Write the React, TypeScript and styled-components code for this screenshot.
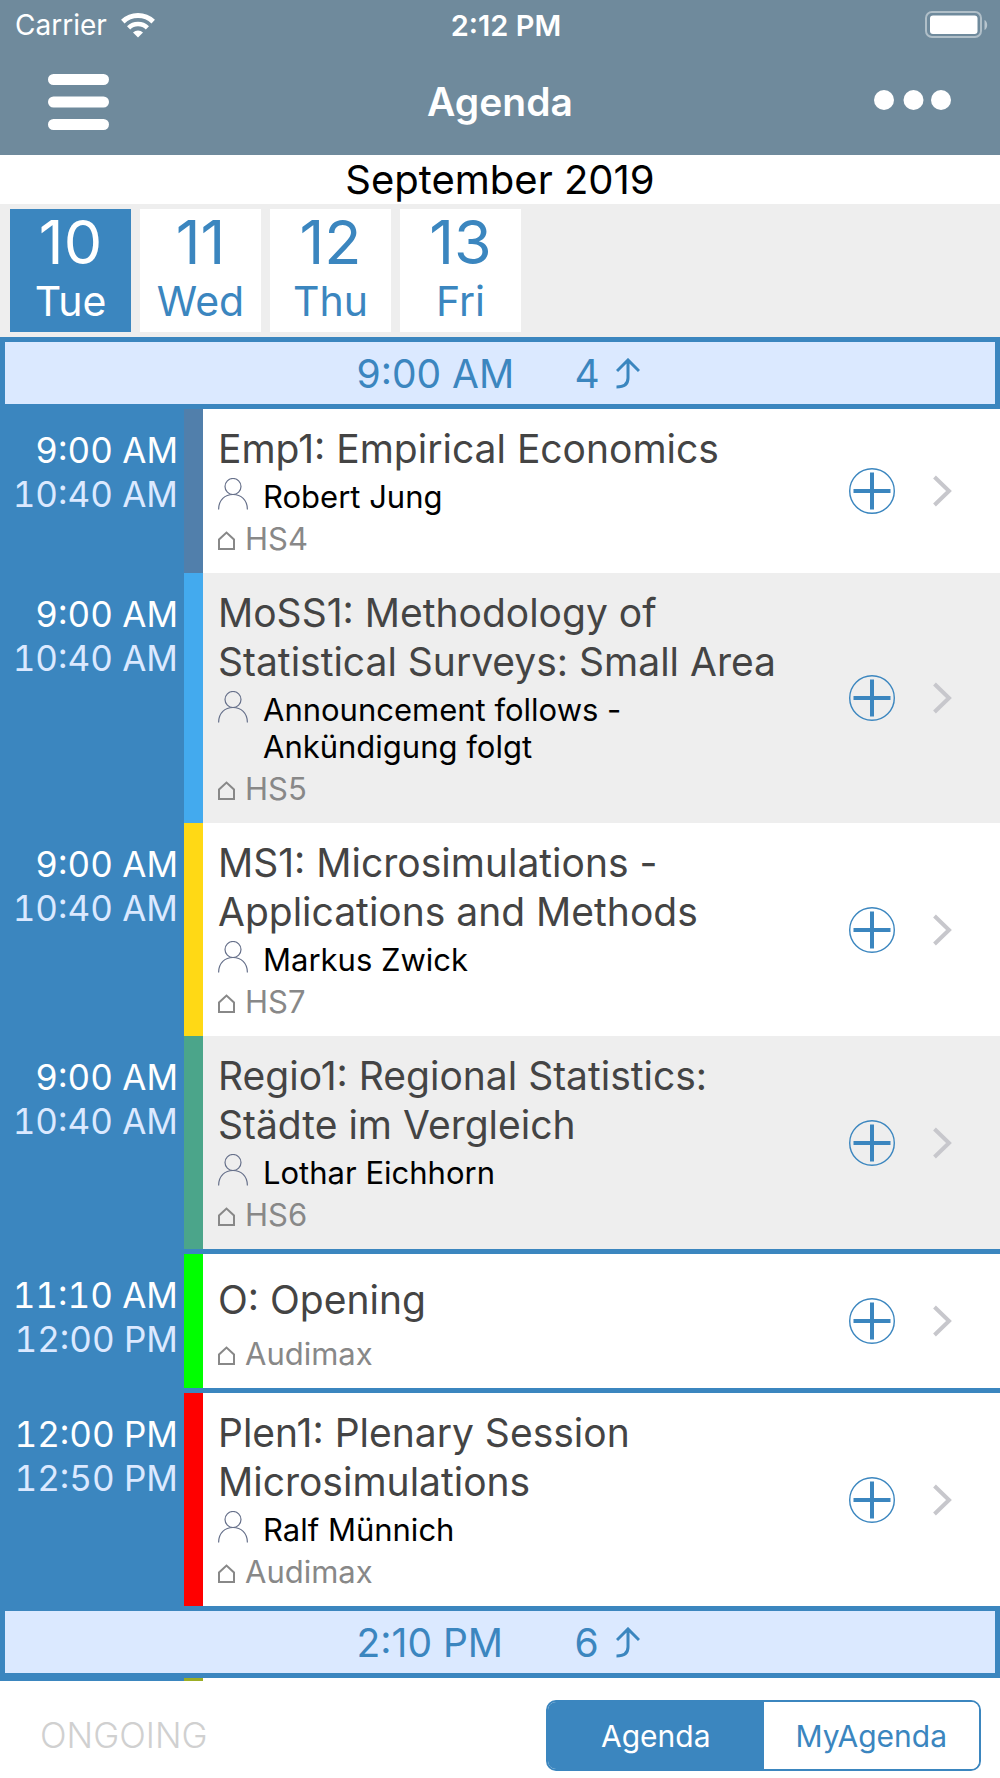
import React, { useState } from "react";
import styled, { createGlobalStyle } from "styled-components";

const color = {
  header: "#6f8a9c",
  blue: "#3b86bf",
  pale: "#dbe9ff",
  grey: "#eeeeee",
  title: "#444444",
  muted: "#888888",
  chevron: "#c7c7cc",
};

const GlobalStyle = createGlobalStyle`
  *, *::before, *::after { box-sizing: border-box; }
  body {
    margin: 0;
    background: #fff;
    font-family: Inter, "Liberation Sans", sans-serif;
    -webkit-font-smoothing: antialiased;
  }
  button, a { font: inherit; color: inherit; text-decoration: none; }
  button { border: 0; padding: 0; background: none; cursor: pointer; }
  svg { display: block; flex: none; }
  h1, h2, p { margin: 0; padding: 0; font: inherit; }
`;

const Screen = styled.div`
  display: flex;
  flex-direction: column;
  min-height: 100vh;
  background: #fff;
`;

const Header = styled.header`
  background: ${color.header};
  color: #fff;
`;

const StatusBar = styled.div`
  display: grid;
  grid-template-columns: 1fr auto 1fr;
  align-items: center;
  height: 50px;
  padding: 0 12px 0 15px;
  font-size: 28px;
`;

const Carrier = styled.span`
  display: flex;
  align-items: center;
  gap: 14px;
`;

const Clock = styled.time`
  padding-left: 9px;
  font-size: 29px;
  font-weight: 600;
`;

const Battery = styled.span`
  justify-self: end;
`;

const NavBar = styled.div`
  display: grid;
  grid-template-columns: 1fr auto 1fr;
  align-items: center;
  height: 105px;
  padding: 0 48px 2px;
`;

const NavTitle = styled.h1`
  font-size: 39px;
  font-weight: 600;
`;

const IconButton = styled.button<{ $end?: boolean }>`
  justify-self: ${(p) => (p.$end ? "end" : "start")};
`;

const Month = styled.h2`
  height: 49px;
  line-height: 49px;
  font-size: 40px;
  text-align: center;
  color: #000;
`;

const DayStrip = styled.nav`
  display: flex;
  gap: 9px;
  padding: 5px 10px;
  background: ${color.grey};
`;

const DayButton = styled.button<{ $active: boolean }>`
  display: flex;
  flex-direction: column;
  align-items: center;
  width: 121px;
  height: 123px;
  background: ${(p) => (p.$active ? color.blue : "#fff")};
  color: ${(p) => (p.$active ? "#fff" : color.blue)};
`;

const DayNumber = styled.span`
  font-size: 61px;
  line-height: 67px;
`;

const DayName = styled.span`
  font-size: 41px;
  line-height: 50px;
`;

const List = styled.main`
  display: flex;
  flex: 1;
  flex-direction: column;
`;

const BandRow = styled.h2`
  display: grid;
  grid-template-columns: 218px 65px;
  justify-content: center;
  align-items: center;
  height: 72px;
  padding-right: 4px;
  border: 5px solid ${color.blue};
  background: ${color.pale};
  color: ${color.blue};
  font-size: 39px;
`;

const BandCount = styled.span`
  display: flex;
  align-items: center;
  justify-content: space-between;
`;

const Row = styled.article<{ $shaded: boolean; $divided: boolean }>`
  display: grid;
  grid-template-columns: 184px 19px 1fr 84px 79px;
  border-bottom: ${(p) => (p.$divided ? 5 : 0)}px solid ${color.blue};
  background: ${(p) => (p.$shaded ? color.grey : "#fff")};
`;

const Times = styled.div`
  display: flex;
  flex-direction: column;
  padding: 19px 6px 0 0;
  background: ${color.blue};
  font-size: 35px;
  font-variant-numeric: tabular-nums;
  line-height: 44px;
  text-align: right;
  white-space: nowrap;
`;

const Start = styled.time`
  color: #fff;
`;

const End = styled.time`
  color: ${color.pale};
`;

const Track = styled.div<{ $color: string }>`
  background: ${(p) => p.$color};
`;

const Details = styled.div`
  padding: 15px 0 15px 15px;
`;

const Title = styled.a<{ $roomy: boolean }>`
  display: block;
  padding: ${(p) => (p.$roomy ? 6 : 0)}px 0;
  color: ${color.title};
  font-size: 39px;
  line-height: 49px;
`;

const Speaker = styled.p`
  display: flex;
  gap: 15px;
  padding-top: 5px;
  color: #000;
  font-size: 31px;
  line-height: 37px;
`;

const Room = styled.p`
  display: flex;
  align-items: center;
  gap: 10px;
  padding-top: 5px;
  color: ${color.muted};
  font-size: 31px;
  line-height: 38px;
`;

const RowAction = styled.div`
  display: flex;
  align-items: center;
  padding-left: 12px;
`;

const Footer = styled.footer`
  display: flex;
  align-items: center;
  justify-content: space-between;
  height: 97px;
  padding: 12px 19px 0 40px;
`;

const Ongoing = styled.button`
  padding-bottom: 2px;
  color: #d0d0d0;
  font-size: 35px;
  font-weight: 300;
`;

const Segments = styled.div`
  display: grid;
  grid-template-columns: 1fr 1fr;
  width: 435px;
  height: 71px;
  overflow: hidden;
  border: 2px solid ${color.blue};
  border-radius: 10px;
`;

const Segment = styled.button<{ $active: boolean }>`
  background: ${(p) => (p.$active ? color.blue : "#fff")};
  color: ${(p) => (p.$active ? "#fff" : color.blue)};
  font-size: 30px;
`;

const WifiIcon = () => (
  <svg width="34" height="25" viewBox="0 0 34 25" fill="none" stroke="#fff">
    <path d="M1.8 8.6a22 22 0 0 1 30.4 0" strokeWidth="5" />
    <path d="M7.6 14.800a13.600 13.600 0 0 1 18.800 0" strokeWidth="4.600" />
    <path d="M17 24.600l-5-5a7.200 7.200 0 0 1 10 0z" fill="#fff" stroke="none" />
  </svg>
);

const BatteryIcon = () => (
  <svg width="63" height="28" viewBox="0 0 63 28">
    <rect x="1" y="1" width="55" height="25" rx="6" fill="none" stroke="#fff" strokeOpacity=".45" strokeWidth="2" />
    <rect x="5" y="4.500" width="47.500" height="18.500" rx="3" fill="#fff" />
    <path d="M59.500 9c3.600 1.500 3.600 8.500 0 10z" fill="#fff" fillOpacity=".5" />
  </svg>
);

const MenuIcon = () => (
  <svg width="61" height="56" viewBox="0 0 61 56" fill="#fff">
    <rect width="61" height="11" rx="5.500" />
    <rect y="22.500" width="61" height="11" rx="5.500" />
    <rect y="45" width="61" height="11" rx="5.500" />
  </svg>
);

const MoreIcon = () => (
  <svg width="78" height="24" viewBox="0 0 78 24" fill="#fff">
    <circle cx="10" cy="10" r="10" />
    <circle cx="39.500" cy="10" r="10" />
    <circle cx="67" cy="10" r="10" />
  </svg>
);

const ArrowIcon = () => (
  <svg width="24" height="31" viewBox="0 0 24 31" fill="none" stroke={color.blue} strokeWidth="3">
    <path d="M1 13L12 2l11 11M12 2v18c0 6-4 9-11.500 9" />
  </svg>
);

const PersonIcon = () => (
  <svg width="30" height="32" viewBox="0 0 30 32" fill="none" stroke="#66708a" strokeWidth="1.200">
    <circle cx="15" cy="8.500" r="8" />
    <path d="M.6 31.500C.6 22 7 16.500 15 16.500S29.400 22 29.400 31.500" />
  </svg>
);

const HouseIcon = () => (
  <svg width="17" height="22" viewBox="0 0 17 22" fill="none" stroke={color.muted} strokeWidth="2">
    <path d="M1 21V11.500L8.500 4.500 16 11.500V21z" />
  </svg>
);

const AddIcon = () => (
  <svg width="46" height="46" viewBox="0 0 46 46" fill="none" stroke={color.blue}>
    <circle cx="23" cy="23" r="22.300" strokeWidth="1.400" />
    <path d="M23 4.500v37M4.500 23h37" strokeWidth="4" />
  </svg>
);

const ChevronIcon = () => (
  <svg width="20" height="32" viewBox="0 0 20 32" fill="none" stroke={color.chevron} strokeWidth="4">
    <path d="M1.500 2l14.500 14L1.500 30" />
  </svg>
);

type Session = {
  start: string;
  end: string;
  track: string;
  title: string[];
  speaker?: string[];
  room: string;
  shaded?: boolean;
  divided?: boolean;
};

const days = [
  { number: 10, name: "Tue" },
  { number: 11, name: "Wed" },
  { number: 12, name: "Thu" },
  { number: 13, name: "Fri" },
];

const sessions: Session[] = [
  { start: "9:00 AM", end: "10:40 AM", track: "#517fab", title: ["Emp1: Empirical Economics"], speaker: ["Robert Jung"], room: "HS4" },
  { start: "9:00 AM", end: "10:40 AM", track: "#43aaee", title: ["MoSS1: Methodology of", "Statistical Surveys: Small Area"], speaker: ["Announcement follows -", "Ankündigung folgt"], room: "HS5", shaded: true },
  { start: "9:00 AM", end: "10:40 AM", track: "#ffd915", title: ["MS1: Microsimulations -", "Applications and Methods"], speaker: ["Markus Zwick"], room: "HS7" },
  { start: "9:00 AM", end: "10:40 AM", track: "#4ba58a", title: ["Regio1: Regional Statistics:", "Städte im Vergleich"], speaker: ["Lothar Eichhorn"], room: "HS6", shaded: true, divided: true },
  { start: "11:10 AM", end: "12:00 PM", track: "#00ff00", title: ["O: Opening"], room: "Audimax", divided: true },
  { start: "12:00 PM", end: "12:50 PM", track: "#ff0000", title: ["Plen1: Plenary Session", "Microsimulations"], speaker: ["Ralf Münnich"], room: "Audimax" },
];

const Lines = ({ lines }: { lines: string[] }) => (
  <span>
    {lines.map((line, i) => (
      <React.Fragment key={line}>
        {i > 0 && <br />}
        {line}
      </React.Fragment>
    ))}
  </span>
);

const Band = ({ time, count }: { time: string; count: number }) => (
  <BandRow>
    <time>{time}</time>
    <BandCount>
      {count}
      <ArrowIcon />
    </BandCount>
  </BandRow>
);

const SessionRow = ({ session }: { session: Session }) => (
  <Row $shaded={!!session.shaded} $divided={!!session.divided}>
    <Times>
      <Start>{session.start}</Start>
      <End>{session.end}</End>
    </Times>
    <Track $color={session.track} />
    <Details>
      <Title href="#" $roomy={!session.speaker}>
        <Lines lines={session.title} />
      </Title>
      {session.speaker && (
        <Speaker>
          <PersonIcon />
          <Lines lines={session.speaker} />
        </Speaker>
      )}
      <Room>
        <HouseIcon />
        {session.room}
      </Room>
    </Details>
    <RowAction>
      <IconButton aria-label="Add to MyAgenda">
        <AddIcon />
      </IconButton>
    </RowAction>
    <RowAction>
      <IconButton aria-label="Open session">
        <ChevronIcon />
      </IconButton>
    </RowAction>
  </Row>
);

const NextRow = styled(Row)`
  flex: 1;
`;

export default function App() {
  const [day, setDay] = useState(10);
  const [view, setView] = useState("Agenda");

  return (
    <Screen>
      <GlobalStyle />
      <Header>
        <StatusBar>
          <Carrier>
            Carrier
            <WifiIcon />
          </Carrier>
          <Clock>2:12 PM</Clock>
          <Battery>
            <BatteryIcon />
          </Battery>
        </StatusBar>
        <NavBar>
          <IconButton aria-label="Menu">
            <MenuIcon />
          </IconButton>
          <NavTitle>Agenda</NavTitle>
          <IconButton $end aria-label="More">
            <MoreIcon />
          </IconButton>
        </NavBar>
      </Header>
      <Month>September 2019</Month>
      <DayStrip>
        {days.map((d) => (
          <DayButton key={d.number} $active={d.number === day} onClick={() => setDay(d.number)}>
            <DayNumber>{d.number}</DayNumber>
            <DayName>{d.name}</DayName>
          </DayButton>
        ))}
      </DayStrip>
      <List>
        <Band time="9:00 AM" count={4} />
        {sessions.map((s) => (
          <SessionRow key={s.title[0]} session={s} />
        ))}
        <Band time="2:10 PM" count={6} />
        <NextRow as="div" $shaded={false} $divided={false}>
          <Track $color={color.blue} />
          <Track $color="#9cae25" />
        </NextRow>
      </List>
      <Footer>
        <Ongoing>ONGOING</Ongoing>
        <Segments>
          {["Agenda", "MyAgenda"].map((name) => (
            <Segment key={name} $active={name === view} onClick={() => setView(name)}>
              {name}
            </Segment>
          ))}
        </Segments>
      </Footer>
    </Screen>
  );
}
